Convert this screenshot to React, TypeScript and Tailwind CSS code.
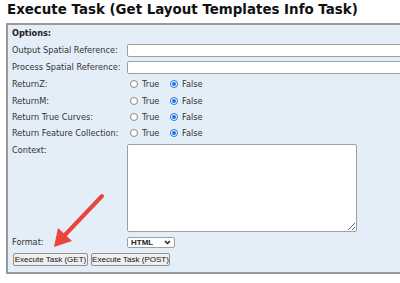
import React from "react";

const rowLabel = "w-[115px] shrink-0";

function Radio({ checked }: { checked?: boolean }) {
  return checked ? (
    <span className="inline-flex h-[8px] w-[8px] items-center justify-center rounded-full border border-[#1a73e8] bg-white">
      <span className="h-[4px] w-[4px] rounded-full bg-[#1a73e8]" />
    </span>
  ) : (
    <span className="inline-block h-[8px] w-[8px] rounded-full border border-[#8a8a8a] bg-white" />
  );
}

function BoolRow({ label, h = "h-[16px]" }: { label: string; h?: string }) {
  return (
    <div className={`flex items-center ${h}`}>
      <div className={rowLabel}>{label}</div>
      <div className="flex items-center pl-[3px]">
        <Radio />
        <span className="ml-[4px] w-[28px]">True</span>
        <Radio checked />
        <span className="ml-[4px]">False</span>
      </div>
    </div>
  );
}

export default function App() {
  return (
    <div
      className="relative h-[283px] w-[400px] overflow-hidden bg-white text-[#222]"
      style={{ fontFamily: '"DejaVu Sans", Verdana, sans-serif' }}
    >
      <h1 className="ml-[7px] h-[23px] pt-[2px] text-[13.4px] font-bold leading-[16px] text-[#111]">
        Execute Task (Get Layout Templates Info Task)
      </h1>

      <div className="ml-[6px] w-[440px] border-2 border-[#9a9a9a] bg-[#e4eef8] pb-[6px] pl-[4px] text-[8.2px] text-[#333]">
        <div className="flex h-[17px] items-center font-bold text-[#222]">Options:</div>

        <div className="flex h-[17px] items-center">
          <div className={rowLabel}>Output Spatial Reference:</div>
          <div className="h-[13px] flex-1 rounded-[2px] border border-[#a0a0a0] bg-white" />
        </div>
        <div className="flex h-[17px] items-center">
          <div className={rowLabel}>Process Spatial Reference:</div>
          <div className="h-[13px] flex-1 rounded-[2px] border border-[#a0a0a0] bg-white" />
        </div>
        <BoolRow label="ReturnZ:" h="h-[17px]" />
        <BoolRow label="ReturnM:" />
        <BoolRow label="Return True Curves:" />
        <BoolRow label="Return Feature Collection:" />

        <div className="flex h-[94px] items-start">
          <div className={`${rowLabel} pt-[3px]`}>Context:</div>
          <textarea className="mt-[3px] h-[88px] w-[230px] rounded-[2px] border border-[#a0a0a0] bg-white" />
        </div>

        <div className="flex h-[15px] items-center">
          <div className={rowLabel}>Format:</div>
          <div
            className="flex h-[11px] w-[48px] items-center justify-between rounded-[2px] border border-[#a0a0a0] bg-white px-[3px] text-[8px] font-bold text-[#222]"
            style={{ fontFamily: '"Liberation Sans", Arial, sans-serif' }}
          >
            <span>HTML</span>
            <svg width="7" height="5" viewBox="0 0 7 5">
              <path d="M1 1 L3.5 3.5 L6 1" stroke="#222" strokeWidth="1.5" fill="none" />
            </svg>
          </div>
        </div>

        <div
          className="mt-[3px] flex gap-[3px] pl-[1px] text-[8px] text-[#111]"
          style={{ fontFamily: '"Liberation Sans", Arial, sans-serif' }}
        >
          <button className="h-[13px] w-[75px] rounded-[2px] border border-[#8f8f8f] bg-[#efefef] leading-[11px]">
            Execute Task (GET)
          </button>
          <button className="h-[13px] w-[79px] rounded-[2px] border border-[#8f8f8f] bg-[#efefef] leading-[11px]">
            Execute Task (POST)
          </button>
        </div>
      </div>

      <svg className="absolute left-0 top-0" width="400" height="283" viewBox="0 0 400 283">
        <line x1="102" y1="196" x2="63" y2="237" stroke="#e8453c" strokeWidth="4" strokeLinecap="round" />
        <polygon points="54,247 58,228 72,241" fill="#e8453c" />
      </svg>
    </div>
  );
}
